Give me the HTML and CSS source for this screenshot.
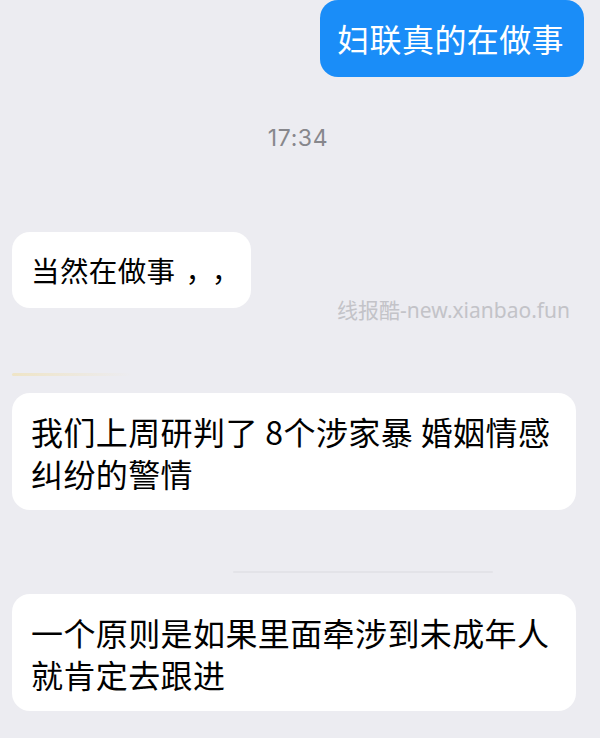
FILE: index.html
```html
<!DOCTYPE html>
<html lang="zh-CN">
<head>
<meta charset="utf-8">
<title>聊天</title>
<link rel="stylesheet" href="styles.css">
</head>
<body>
<div class="chat">
  <div class="bubble out">妇联真的在做事</div>
  <div class="time">17:34</div>
  <div class="row">
    <div class="bubble in small">当然在做事<span class="punct">，，</span></div>
    <div class="watermark">线报酷-new.xianbao.fun</div>
  </div>
  <div class="smudge warm"></div>
  <div class="bubble in wide">我们上周研判了 8个涉家暴 婚姻情感<br>纠纷的警情</div>
  <div class="smudge cool"></div>
  <div class="bubble in wide last">一个原则是如果里面牵涉到未成年人<br>就肯定去跟进</div>
</div>
</body>
</html>
```

FILE: styles.css
```css
html, body {
  margin: 0;
  padding: 0;
  background: #ececf1;
}
body {
  width: 600px;
  height: 738px;
  overflow: hidden;
  font-family: "Noto Sans CJK SC", "Noto Sans", sans-serif;
}
.chat {
  display: flex;
  flex-direction: column;
  padding: 0 24px 0 12px;
}
.bubble {
  border-radius: 18px;
  font-size: 32px;
  line-height: 42px;
  letter-spacing: 0.4px;
  color: #000;
}
.out {
  align-self: flex-end;
  margin-right: -8px;
  background: #1a8df8;
  color: #fff;
  padding: 17px 20px 18px 17px;
}
.time {
  align-self: center;
  margin-top: 48px;
  margin-left: 8px;
  font-family: "Inter", "Liberation Sans", sans-serif;
  font-size: 23px;
  letter-spacing: 0.6px;
  line-height: 26px;
  color: #87878c;
}
.row {
  position: relative;
  margin-top: 81px;
  display: flex;
}
.in {
  background: #fff;
}
.small {
  font-size: 28.5px;
  letter-spacing: 0.4px;
  white-space: nowrap;
  padding: 17px 11px 17px 19px;
}
.punct {
  padding-left: 10px;
  letter-spacing: 12px;
  margin-right: -12px;
}
.watermark {
  position: absolute;
  right: 6px;
  top: 66px;
  font-family: "Noto Sans", "Noto Sans CJK SC", sans-serif;
  font-size: 21px;
  line-height: 24px;
  color: #c3c3c8;
}
.smudge {
  height: 3px;
  border-radius: 2px;
}
.warm {
  margin-top: 65px;
  width: 120px;
  background: linear-gradient(90deg, rgba(240, 225, 180, 0.7), rgba(245, 240, 220, 0));
}
.cool {
  margin-top: 61px;
  margin-left: 221px;
  width: 260px;
  height: 2px;
  background: rgba(225, 225, 230, 0.8);
}
.wide {
  margin-top: 17px;
  padding: 17px 19px 16px 19px;
}
.last {
  margin-top: 21px;
}
```
